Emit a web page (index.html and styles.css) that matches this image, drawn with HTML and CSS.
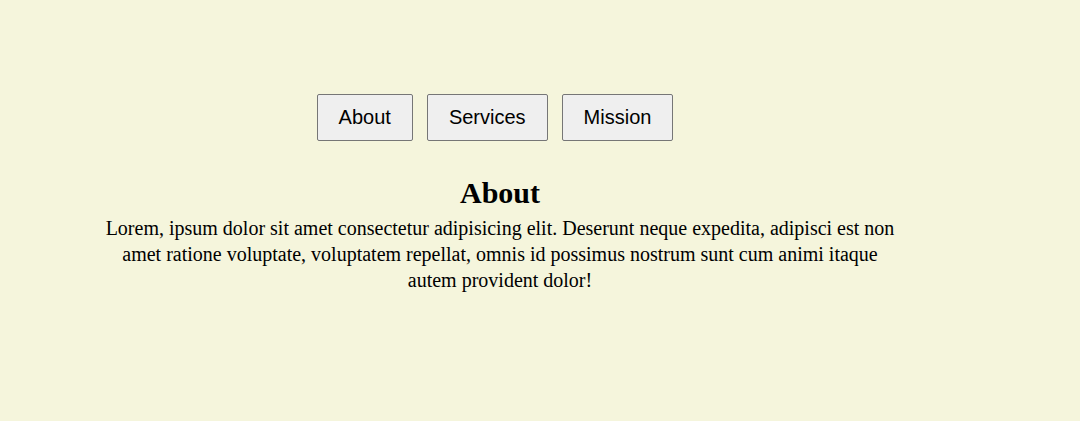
FILE: index.html
```html
<!DOCTYPE html>
<html>
<head>
<meta charset="utf-8">
<link rel="stylesheet" href="styles.css">
</head>
<body>
<div class="wrap">
  <nav class="tabs">
    <button class="tab">About</button>
    <button class="tab">Services</button>
    <button class="tab">Mission</button>
  </nav>
  <section class="panel">
    <h1 class="title">About</h1>
    <p class="text">Lorem, ipsum dolor sit amet consectetur adipisicing elit. Deserunt neque expedita, adipisci est non amet ratione voluptate, voluptatem repellat, omnis id possimus nostrum sunt cum animi itaque autem provident dolor!</p>
  </section>
</div>
</body>
</html>
```
FILE: styles.css
```css
html, body {
  margin: 0;
  padding: 0;
  background: #f5f5dc;
}
body {
  font-family: "Liberation Serif", "Times New Roman", serif;
  color: #000;
}
.wrap {
  width: 800px;
  margin-left: 100px;
  padding-top: 94px;
  text-align: center;
}
.tabs {
  display: flex;
  justify-content: center;
  gap: 14px;
  padding-right: 10px;
}
.tab {
  font-family: "Liberation Sans", Arial, sans-serif;
  font-size: 20px;
  line-height: 23px;
  padding: 11px 21px;
  background: #efefef;
  border: 1px solid #767676;
  border-radius: 2px;
  color: #000;
  margin: 0;
}
.panel {
  padding-top: 34px;
}
.title {
  font-size: 30px;
  line-height: 36px;
  margin: 0;
  font-weight: bold;
}
.text {
  font-size: 20px;
  line-height: 26px;
  margin: 0;
  padding-top: 4px;
}
```
